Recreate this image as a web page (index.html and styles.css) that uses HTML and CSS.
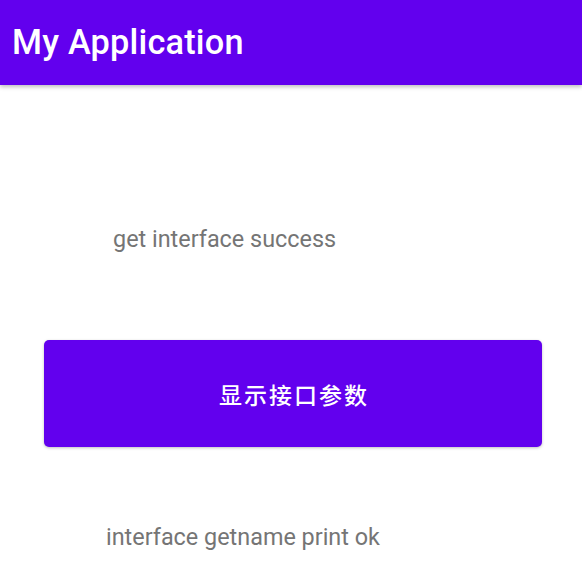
FILE: index.html
```html
<!DOCTYPE html>
<html lang="zh">
<head>
<meta charset="utf-8">
<title>My Application</title>
<link rel="stylesheet" href="styles.css">
</head>
<body>
<header class="appbar">
  <h1 class="title">My Application</h1>
</header>
<main class="content">
  <p class="msg msg-first">get interface success</p>
  <button class="action" type="button">显示接口参数</button>
  <p class="msg msg-second">interface getname print ok</p>
</main>
</body>
</html>
```
FILE: styles.css
```css
html, body {
  margin: 0;
  padding: 0;
  background: #ffffff;
}
body {
  width: 582px;
  height: 570px;
  overflow: hidden;
  font-family: Roboto, "Noto Sans CJK SC", sans-serif;
}
.appbar {
  height: 85px;
  background: #6200ee;
  display: flex;
  align-items: center;
  padding-left: 12px;
  box-shadow: 0 2px 4px rgba(0, 0, 0, 0.25);
  position: relative;
}
.title {
  margin: 0;
  color: #ffffff;
  font-size: 34.3px;
  font-weight: 500;
  letter-spacing: 0.2px;
  line-height: 40px;
  padding-bottom: 2px;
}
.content {
  display: flex;
  flex-direction: column;
}
.msg {
  margin: 0;
  color: #757575;
  font-size: 23.4px;
  line-height: 28px;
}
.msg-first {
  margin-top: 140px;
  padding-left: 113px;
}
.action {
  margin: 87px 0 0 44px;
  width: 498px;
  height: 107px;
  border: none;
  border-radius: 5px;
  background: #6200ee;
  color: #ffffff;
  font-family: "Noto Sans CJK SC", sans-serif;
  font-size: 23px;
  font-weight: 500;
  letter-spacing: 2px;
  text-indent: 2px;
  box-shadow: 0 1px 3px rgba(0, 0, 0, 0.25);
}
.msg-second {
  margin-top: 76px;
  padding-left: 106px;
}
```
